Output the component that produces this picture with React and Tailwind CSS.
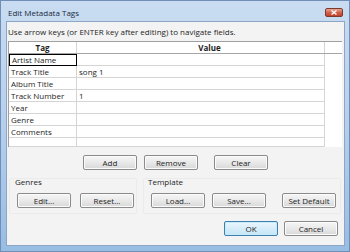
import React from 'react';

const rows = [
  { tag: 'Artist Name', value: '', selected: true },
  { tag: 'Track Title', value: 'song 1' },
  { tag: 'Album Title', value: '' },
  { tag: 'Track Number', value: '1' },
  { tag: 'Year', value: '' },
  { tag: 'Genre', value: '' },
  { tag: 'Comments', value: '' },
];

function Btn({ children, className = '', primary = false }) {
  return (
    <div
      className={`h-[15px] w-[54px] flex items-center justify-center rounded-[2px] border text-[8px] text-[#1e1e1e] ${
        primary
          ? 'border-[#3c7fb1] bg-gradient-to-b from-[#eaf6fd] to-[#c4e5f6] shadow-[inset_0_0_0_1px_#c9eaf9]'
          : 'border-[#8b8b8b] bg-gradient-to-b from-[#f6f6f6] via-[#e9e9e9] to-[#d8d8d8] shadow-[inset_0_0_0_1px_#fbfbfb]'
      } ${className}`}
    >
      {children}
    </div>
  );
}

export default function App() {
  return (
    <div
      className="w-[350px] h-[252px] flex flex-col bg-gradient-to-b from-[#c9dcf1] via-[#b5cfec] to-[#98bde3] border border-[#6f8fb8]"
      style={{ fontFamily: '"Open Sans", "Noto Sans", sans-serif' }}
    >
      {/* title bar */}
      <div className="h-[20px] pt-[3px] flex items-center justify-between pl-[7px] pr-[6px] shrink-0">
        <span className="text-[8px] text-[#1b2a3d] leading-none">Edit Metadata Tags</span>
        <div className="w-[18px] h-[9px] rounded-[2px] border border-[#7a3a2e] bg-gradient-to-b from-[#e8a493] via-[#d0624b] to-[#c0402a] flex items-center justify-center">
          <svg width="6" height="5" viewBox="0 0 6 5">
            <path d="M0.5 0.5 L5.5 4.5 M5.5 0.5 L0.5 4.5" stroke="#fff" strokeWidth="1.3" />
          </svg>
        </div>
      </div>

      {/* client area */}
      <div className="flex-1 ml-[5px] mr-[4px] mb-[5px] bg-[#f3f3f3] border border-[#8da6c6] flex flex-col">
        <div className="h-[19px] flex items-center pl-[1px] text-[8px] text-[#1e1e1e] leading-none">
          Use arrow keys (or ENTER key after editing) to navigate fields.
        </div>

        {/* table */}
        <div className="ml-[1px] w-[334px] h-[106px] bg-white border-t border-[#a0a0a0] border-l border-l-[#a0a0a0] text-[8px] text-[#1e1e1e] leading-none flex flex-col">
          <div className="h-[12px] flex border-b border-[#a5a5a5] font-bold shrink-0">
            <div className="w-[68px] flex items-center justify-center border-r border-[#d5d5d5]">Tag</div>
            <div className="w-[248px] flex items-center justify-center pl-[18px] border-r border-[#d5d5d5]">Value</div>
            <div className="flex-1" />
          </div>
          {rows.map((r) => (
            <div key={r.tag} className="h-[12px] flex shrink-0">
              <div
                className={`w-[68px] flex items-center pl-[2px] ${
                  r.selected ? 'border border-black' : 'border-r border-b border-[#d5d5d5]'
                }`}
              >
                {r.tag}
              </div>
              <div className="w-[248px] flex items-center pl-[2px] border-r border-b border-[#d5d5d5]">{r.value}</div>
              <div className="flex-1" />
            </div>
          ))}
          <div className="flex-1 flex">
            <div className="w-[68px] border-r border-b border-[#d5d5d5]" />
            <div className="w-[248px] border-r border-b border-[#d5d5d5]" />
            <div className="flex-1" />
          </div>
        </div>

        {/* add / remove / clear */}
        <div className="flex mt-[8px] pl-[76px]">
          <Btn>Add</Btn>
          <Btn className="ml-[7px]">Remove</Btn>
          <Btn className="ml-[16px]">Clear</Btn>
        </div>

        {/* group boxes */}
        <div className="flex mt-[8px]">
          <div className="ml-[2px] w-[128px] h-[36px] border border-[#ebebeb] rounded-[2px] flex flex-col">
            <div className="text-[8px] text-[#1e1e1e] leading-none pl-[5px] -mt-[1px]">Genres</div>
            <div className="flex mt-[7px] pl-[7px]">
              <Btn className="w-[53px]">Edit...</Btn>
              <Btn className="ml-[9px]">Reset...</Btn>
            </div>
          </div>
          <div className="ml-[6px] flex-1 mr-[3px] h-[36px] border border-[#ebebeb] rounded-[2px] flex flex-col">
            <div className="text-[8px] text-[#1e1e1e] leading-none pl-[4px] -mt-[1px]">Template</div>
            <div className="flex mt-[7px] pl-[7px]">
              <Btn>Load...</Btn>
              <Btn className="ml-[7px]">Save...</Btn>
              <Btn className="ml-[16px]">Set Default</Btn>
            </div>
          </div>
        </div>

        {/* ok / cancel */}
        <div className="flex justify-end mt-[7px] pr-[6px]">
          <Btn primary>OK</Btn>
          <Btn className="ml-[6px]">Cancel</Btn>
        </div>
      </div>
    </div>
  );
}
